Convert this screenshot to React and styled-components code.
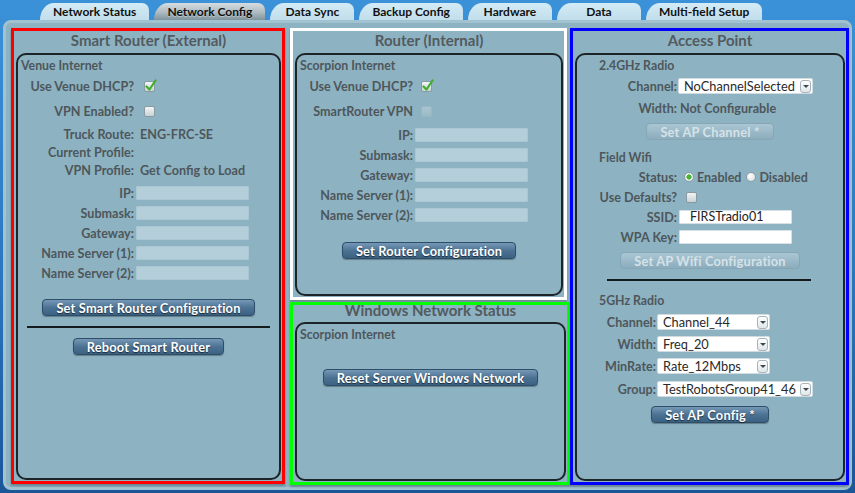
import React from 'react';
import styled, { createGlobalStyle } from 'styled-components';

const FONT = `Lato, "Liberation Sans", Arial, sans-serif`;

const GlobalStyle = createGlobalStyle`
  html, body {
    margin: 0;
    padding: 0;
  }
  body {
    width: 855px;
    height: 493px;
    overflow: hidden;
    background: linear-gradient(180deg, #3b92d8 0%, #2b77c0 55%, #1b5698 100%);
    font-family: ${FONT};
  }
`;

const Screen = styled.div`
  width: 855px;
  height: 493px;
  box-sizing: border-box;
  padding: 3px 3px 0 3px;
  display: flex;
  flex-direction: column;
`;

const TabBar = styled.div`
  display: flex;
  gap: 5px;
  padding-left: 37px;
  height: 17px;
  flex-shrink: 0;
`;

const Tab = styled.div`
  min-width: 84px;
  padding: 0 13px;
  box-sizing: border-box;
  height: 17px;
  display: flex;
  align-items: center;
  justify-content: center;
  font: 700 12px ${FONT};
  color: #111;
  border-radius: 14px 7px 0 0 / 17px 7px 0 0;
  background: ${(p) =>
    p.$active
      ? 'linear-gradient(180deg, #d6dde0 0%, #aebbc1 55%, #7f939c 100%)'
      : 'linear-gradient(180deg, #d3ebf5 0%, #c1deeb 100%)'};
  text-shadow: ${(p) => (p.$active ? '0 1px 0 rgba(255,255,255,0.35)' : 'none')};
`;

const Panel = styled.div`
  height: 470px;
  box-sizing: border-box;
  border: 3px solid #a1c2d0;
  border-radius: 8px;
  background: #8db2c2;
  padding: 5px 0 0 5px;
  display: flex;
`;

const Column = styled.div`
  width: ${(p) => p.$w}px;
  margin-right: ${(p) => p.$mr || 0}px;
  display: flex;
  flex-direction: column;
  gap: 2px;
`;

const Section = styled.section`
  box-sizing: border-box;
  width: ${(p) => (p.$w ? `${p.$w}px` : 'auto')};
  height: ${(p) => p.$h}px;
  border: 3px solid ${(p) => p.$frame};
  padding: 0 1px 1px 2px;
  display: flex;
  flex-direction: column;
  box-shadow: 0 2px 2px rgba(0, 0, 0, 0.25);
`;

const SectionTitle = styled.div`
  height: ${(p) => p.$h || 22}px;
  line-height: ${(p) => p.$h || 22}px;
  margin-top: ${(p) => p.$mt || 0}px;
  flex-shrink: 0;
  text-align: center;
  font: 700 15px ${FONT};
  color: #535b5f;
`;

const Inner = styled.div`
  flex: 1;
  border: 2px solid #1d2427;
  border-radius: 10px;
  display: flex;
  flex-direction: column;
`;

const Heading = styled.div`
  height: ${(p) => p.$h || 21}px;
  margin-top: ${(p) => p.$mt || 0}px;
  padding-left: ${(p) => p.$indent || 3}px;
  display: flex;
  align-items: center;
  font: 700 12.3px ${FONT};
  color: #4d575b;
`;

const Row = styled.div`
  display: flex;
  align-items: center;
  height: ${(p) => p.$h || 20}px;
  margin-top: ${(p) => p.$mt || 0}px;
  flex-shrink: 0;
`;

const Label = styled.span`
  width: ${(p) => p.$w}px;
  flex-shrink: 0;
  text-align: right;
  font: 700 12.6px ${FONT};
  color: #4d575b;
  white-space: nowrap;
`;

const Value = styled.span`
  margin-left: ${(p) => p.$ml || 6}px;
  font: 700 12.6px ${FONT};
  color: #4d575b;
  white-space: nowrap;
`;

const Field = styled.div`
  margin-left: 2px;
  width: 113px;
  height: 14px;
  box-sizing: border-box;
  background: ${(p) => (p.$white ? '#ffffff' : '#b4cfda')};
  border: 1px solid ${(p) => (p.$white ? '#d7e0e4' : '#aac8d4')};
  border-radius: 1px;
  font: 400 12.5px ${FONT};
  color: #222;
  line-height: 12px;
  padding-left: 10px;
`;

const Box = styled.span`
  margin-left: ${(p) => p.$ml || 10}px;
  width: 11px;
  height: 11px;
  box-sizing: border-box;
  border-radius: 2px;
  border: 1px solid ${(p) => (p.$disabled ? '#9ab7c4' : '#8a9aa2')};
  background: ${(p) =>
    p.$disabled
      ? 'linear-gradient(180deg, #a8c4d0, #9bb9c6)'
      : 'linear-gradient(180deg, #f2f5f6, #c8d2d6)'};
  position: relative;
  display: inline-block;
  flex-shrink: 0;
`;

const Tick = styled.svg`
  position: absolute;
  left: 0px;
  top: -3px;
`;

const Checkbox = ({ checked, disabled, ml }) => (
  <Box $disabled={disabled} $ml={ml}>
    {checked && (
      <Tick width="12" height="13" viewBox="0 0 12 13">
        <path d="M1.5 7.5 L4.5 10.5 L10.5 1.5" fill="none" stroke="#3fae2a" strokeWidth="2.2" strokeLinecap="round" strokeLinejoin="round" />
      </Tick>
    )}
  </Box>
);

const RadioDot = styled.span`
  width: 10px;
  height: 10px;
  box-sizing: border-box;
  border-radius: 50%;
  border: 1px solid #8e9ea5;
  background: ${(p) =>
    p.$on
      ? 'radial-gradient(circle, #49b632 0 2.4px, #f4f7f8 2.8px, #cdd6da 100%)'
      : 'radial-gradient(circle at 40% 35%, #ffffff 0, #d2dade 100%)'};
  margin-left: ${(p) => p.$ml}px;
  margin-right: 3px;
  flex-shrink: 0;
`;

const RadioText = styled.span`
  font: 700 12.5px ${FONT};
  color: #4d575b;
`;

const Button = styled.div`
  align-self: center;
  height: 17px;
  box-sizing: border-box;
  margin-top: ${(p) => p.$mt || 0}px;
  padding: 0 13px;
  display: flex;
  align-items: center;
  border-radius: 4px;
  font: 700 12.8px ${FONT};
  letter-spacing: 0.2px;
  white-space: nowrap;
  flex-shrink: 0;
  ${(p) =>
    p.$disabled
      ? `
    color: #d5e2e8;
    border: 1px solid #86a6b6;
    background: linear-gradient(180deg, #aac6d3 0%, #8cadbd 100%);
  `
      : `
    color: #ffffff;
    border: 1px solid #2e4d68;
    background: linear-gradient(180deg, #7598b6 0%, #4d7394 50%, #3b6283 100%);
    text-shadow: 0 1px 1px rgba(0, 0, 0, 0.6);
    box-shadow: 0 1px 1px rgba(0, 0, 0, 0.3);
  `}
`;

const Rule = styled.div`
  height: 2px;
  background: #151a1c;
  margin: ${(p) => p.$mt}px ${(p) => p.$mr}px 0 ${(p) => p.$ml}px;
  flex-shrink: 0;
`;

const SelectBox = styled.div`
  margin-left: 1px;
  width: ${(p) => p.$w}px;
  height: 16px;
  box-sizing: border-box;
  background: #fff;
  border: 1px solid #d2dce0;
  border-radius: 2px;
  display: flex;
  align-items: center;
  justify-content: space-between;
  padding: 0 1px 0 5px;
  font: 400 12.8px ${FONT};
  color: #2a2a2a;
`;

const Arrow = styled.span`
  width: 11px;
  height: 13px;
  box-sizing: border-box;
  border: 1px solid #a6b4bb;
  border-radius: 3px;
  background: linear-gradient(180deg, #ffffff, #dfe6e9);
  display: flex;
  align-items: center;
  justify-content: center;
  &::after {
    content: '';
    border-left: 3px solid transparent;
    border-right: 3px solid transparent;
    border-top: 3px solid #3d4a50;
  }
`;

const Select = ({ w, children }) => (
  <SelectBox $w={w}>
    <span>{children}</span>
    <Arrow />
  </SelectBox>
);

const Spacer = styled.div`
  flex: 1;
`;

const ipRows = ['IP:', 'Submask:', 'Gateway:', 'Name Server (1):', 'Name Server (2):'];

const SmartRouter = () => (
  <Section $frame="#ff0000" $h={456}>
    <SectionTitle>Smart Router (External)</SectionTitle>
    <Inner>
      <Heading>Venue Internet</Heading>
      <Row>
        <Label $w={116}>Use Venue DHCP?</Label>
        <Checkbox checked />
      </Row>
      <Row $mt={5}>
        <Label $w={116}>VPN Enabled?</Label>
        <Checkbox />
      </Row>
      <Row $h={18} $mt={4}>
        <Label $w={116}>Truck Route:</Label>
        <Value>ENG-FRC-SE</Value>
      </Row>
      <Row $h={18}>
        <Label $w={116}>Current Profile:</Label>
      </Row>
      <Row $h={18}>
        <Label $w={116}>VPN Profile:</Label>
        <Value>Get Config to Load</Value>
      </Row>
      {ipRows.map((l, i) => (
        <Row key={l} $mt={i === 0 ? 4 : 0}>
          <Label $w={116}>{l}</Label>
          <Field />
        </Row>
      ))}
      <Button $mt={16}>Set Smart Router Configuration</Button>
      <Rule $mt={10} $ml={9} $mr={9} />
      <Button $mt={10}>Reboot Smart Router</Button>
      <Spacer />
    </Inner>
  </Section>
);

const RouterInternal = () => (
  <Section $frame="#ffffff" $h={272} $w={277}>
    <SectionTitle>Router (Internal)</SectionTitle>
    <Inner>
      <Heading>Scorpion Internet</Heading>
      <Row>
        <Label $w={116}>Use Venue DHCP?</Label>
        <Checkbox checked ml={8} />
      </Row>
      <Row $mt={5}>
        <Label $w={116}>SmartRouter VPN</Label>
        <Checkbox disabled ml={8} />
      </Row>
      {ipRows.map((l, i) => (
        <Row key={l} $mt={i === 0 ? 4 : 0}>
          <Label $w={116}>{l}</Label>
          <Field />
        </Row>
      ))}
      <Button $mt={17}>Set Router Configuration</Button>
      <Spacer />
    </Inner>
  </Section>
);

const WindowsStatus = () => (
  <Section $frame="#00ff00" $h={183}>
    <SectionTitle $h={21} $mt={-4}>Windows Network Status</SectionTitle>
    <Inner>
      <Heading>Scorpion Internet</Heading>
      <Button $mt={24}>Reset Server Windows Network</Button>
      <Spacer />
    </Inner>
  </Section>
);

const AccessPoint = () => (
  <Section $frame="#0000ff" $h={457}>
    <SectionTitle>Access Point</SectionTitle>
    <Inner>
      <Heading $indent={22}>2.4GHz Radio</Heading>
      <Row>
        <Label $w={100}>Channel:</Label>
        <Select w={135}>NoChannelSelected</Select>
      </Row>
      <Row $mt={2}>
        <Label $w={100}>Width:</Label>
        <Value $ml={3}>Not Configurable</Value>
      </Row>
      <Button $disabled $mt={5}>Set AP Channel *</Button>
      <Heading $indent={22} $h={20} $mt={7}>Field Wifi</Heading>
      <Row>
        <Label $w={100}>Status:</Label>
        <RadioDot $on $ml={7} />
        <RadioText>Enabled</RadioText>
        <RadioDot $ml={5} />
        <RadioText>Disabled</RadioText>
      </Row>
      <Row>
        <Label $w={100}>Use Defaults?</Label>
        <Checkbox ml={9} />
      </Row>
      <Row>
        <Label $w={100}>SSID:</Label>
        <Field $white>FIRSTradio01</Field>
      </Row>
      <Row>
        <Label $w={100}>WPA Key:</Label>
        <Field $white />
      </Row>
      <Button $disabled $mt={5}>Set AP Wifi Configuration</Button>
      <Rule $mt={10} $ml={30} $mr={32} />
      <Heading $indent={22} $h={20} $mt={9}>5GHz Radio</Heading>
      <Row $mt={2}>
        <Label $w={79}>Channel:</Label>
        <Select w={113}>Channel_44</Select>
      </Row>
      <Row $mt={2}>
        <Label $w={79}>Width:</Label>
        <Select w={113}>Freq_20</Select>
      </Row>
      <Row $mt={2}>
        <Label $w={79}>MinRate:</Label>
        <Select w={113}>Rate_12Mbps</Select>
      </Row>
      <Row $mt={3}>
        <Label $w={79}>Group:</Label>
        <Select w={156}>TestRobotsGroup41_46</Select>
      </Row>
      <Button $mt={7}>Set AP Config *</Button>
      <Spacer />
    </Inner>
  </Section>
);

const tabs = ['Network Status', 'Network Config', 'Data Sync', 'Backup Config', 'Hardware', 'Data', 'Multi-field Setup'];

export default function App() {
  return (
    <>
      <GlobalStyle />
      <Screen>
        <TabBar>
          {tabs.map((t) => (
            <Tab key={t} $active={t === 'Network Config'}>
              {t}
            </Tab>
          ))}
        </TabBar>
        <Panel>
          <Column $w={274} $mr={5}>
            <SmartRouter />
          </Column>
          <Column $w={280}>
            <RouterInternal />
            <WindowsStatus />
          </Column>
          <Column $w={279}>
            <AccessPoint />
          </Column>
        </Panel>
      </Screen>
    </>
  );
}
